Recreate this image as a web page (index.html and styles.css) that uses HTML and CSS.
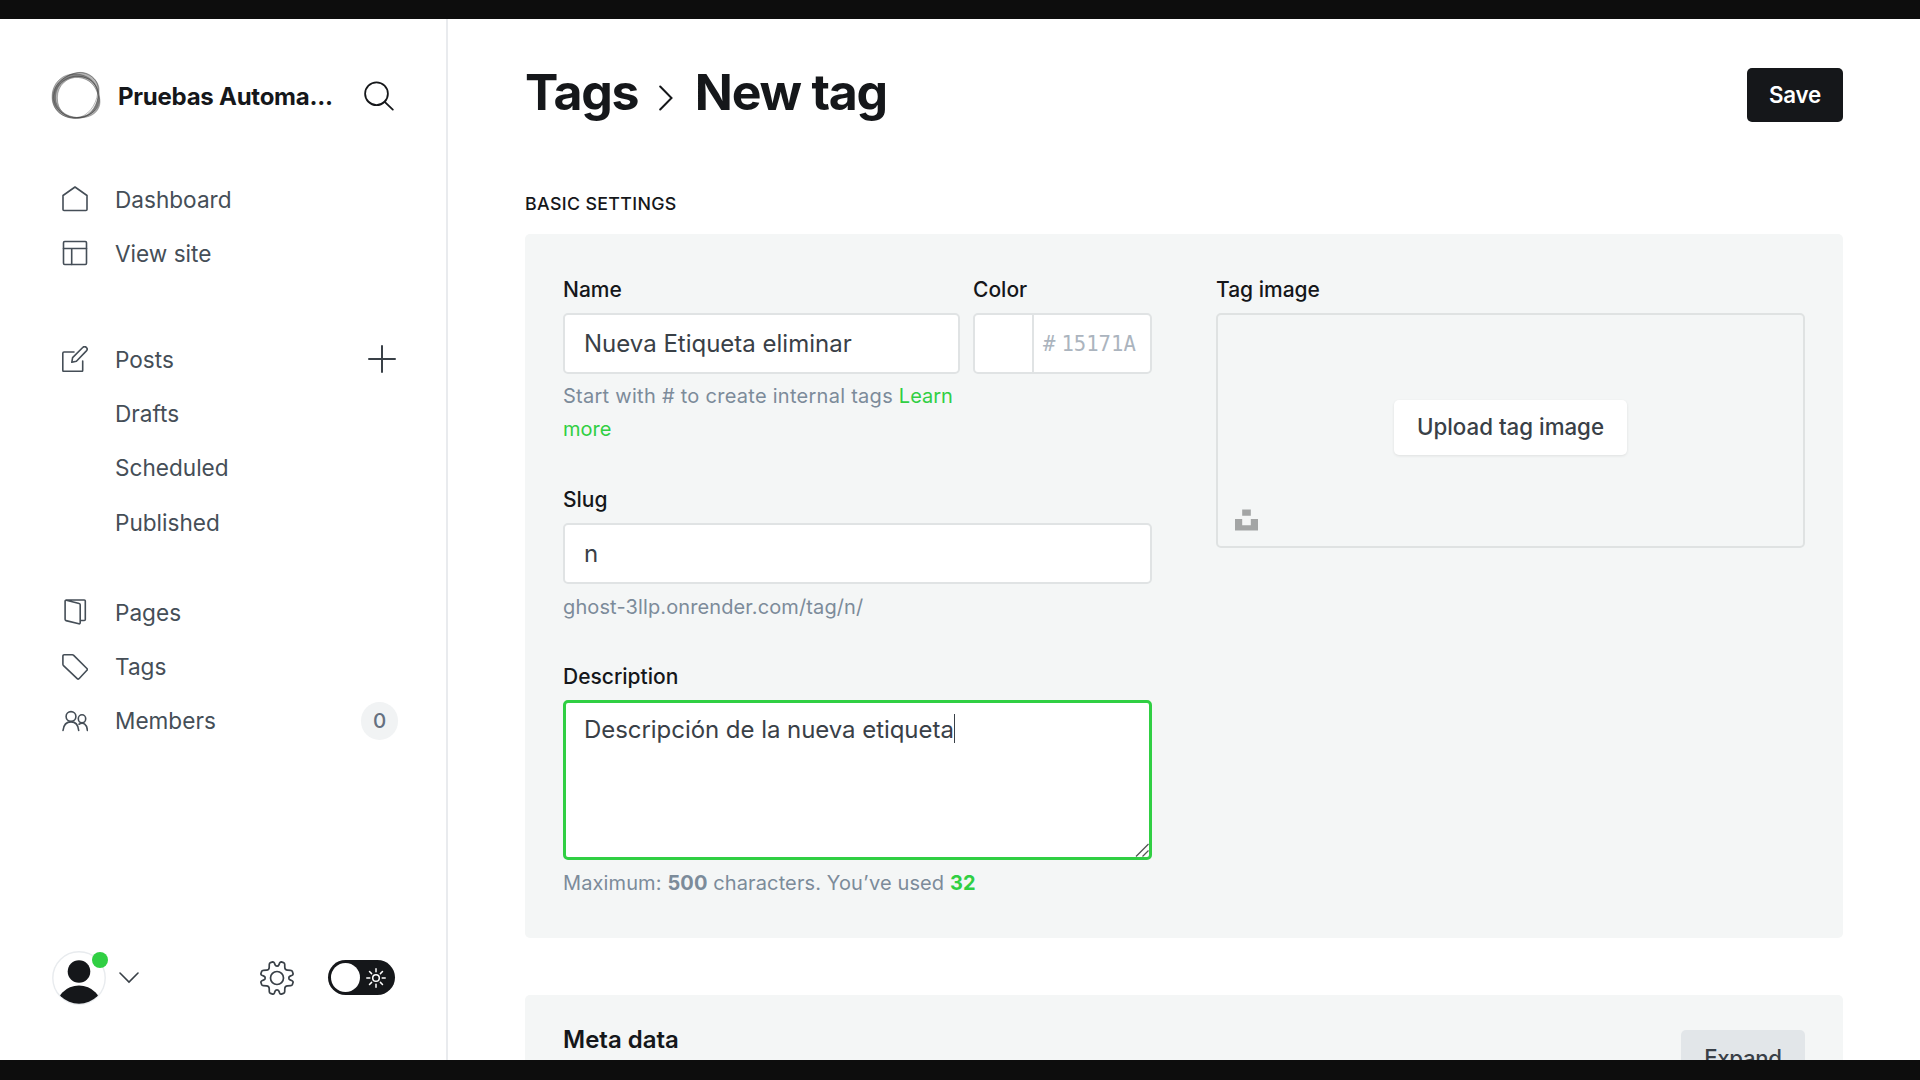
FILE: index.html
```html
<!DOCTYPE html>
<html lang="en">
<head>
<meta charset="utf-8">
<title>Tags - New tag</title>
<link rel="stylesheet" href="styles.css">
</head>
<body>
<div class="screen">
  <aside class="sidebar">
    <header class="site">
      <svg class="site-logo" viewBox="0 0 50 50" fill="#222" fill-opacity=".33" fill-rule="evenodd" stroke="#333" stroke-opacity=".6" stroke-width=".6">
        <path d="M.6 26C.6 12 11 2.500 24 3C37 3.500 47 12 46.500 25C46 38 37 47.500 25 47.500C11 47.500 .6 39 .6 26ZM5.800 27C5.800 14 16 5.500 27 6.500C38 7.500 44.500 15 46.800 25C49.500 38 38 46.500 26 47C14 47.500 5.800 39 5.800 27Z"/>
        <path d="M2 24C3 11 16 4 23 2.300C35-1 47 8 47.500 18C48 26 44 37 38 42C32 47.500 20 48 12 43C5 39 1 33 2 24ZM4 25C5 13 14 7 24 5.500C34 5 42 9 45 17C47 24 50 29 47.500 36C44 45 34 47.500 25 46.500C12 45 3 36 4 25Z"/>
        <path d="M1.200 28C.6 14 13 3.500 27 1.500C39 .2 49 11 46.200 22C45 34 36 46.500 24 47C12 47.300 1.800 40 1.200 28Z" fill="none"/>
        <path d="M3 22C7 9 20 3 32 6C43 9 49 20 48 30C47 41 36 46 25 46.500C11 47 0 35 3 22Z" fill="none"/>
      </svg>
      <div class="site-name">Pruebas Automa...</div>
      <svg class="search" viewBox="0 0 30 30"><circle cx="12.500" cy="12.700" r="11.400"/><path d="M20.700 20.800L28.800 28.600"/></svg>
    </header>
    <nav class="nav">
      <ul class="group">
        <li><svg class="ico" viewBox="0 0 26 26"><path d="M1 9.500L13 1l12 8.500V23.500a1 1 0 0 1-1 1H2a1 1 0 0 1-1-1Z"/></svg><span>Dashboard</span></li>
        <li><svg class="ico" viewBox="0 0 26 26"><rect x="1.500" y="1.500" width="23" height="23" rx="1.200"/><path d="M1.500 8.500h23M9.700 8.500v16"/></svg><span>View site</span></li>
      </ul>
      <ul class="group">
        <li><svg class="ico" viewBox="0 0 26 26"><path d="M12 6H2a1.200 1.200 0 0 0-1.200 1.200v17A1.200 1.200 0 0 0 2 25.400h17.500a1.200 1.200 0 0 0 1.200-1.200V15M9.800 16.300l.8-4.700L20.700 1.500a2.300 2.300 0 0 1 3.700 3.400L14.400 15.200Z"/></svg><span>Posts</span><svg class="plus" viewBox="0 0 28 28"><path d="M14 1v26M1 14h26"/></svg></li>
        <li class="sub"><span>Drafts</span></li>
        <li class="sub"><span>Scheduled</span></li>
        <li class="sub"><span>Published</span></li>
      </ul>
      <ul class="group">
        <li><svg class="ico" viewBox="0 0 26 26"><path d="M4.500 1h17.800a1 1 0 0 1 1 1v18.500a1 1 0 0 1-1 1H18.500M4.300 1.200l12.900 3.300a1.200 1.200 0 0 1 1 1.200v18.100a1 1 0 0 1-1.300 1L4 21.600a1.200 1.200 0 0 1-.9-1.200V2.100a1 1 0 0 1 1.200-.9Z"/></svg><span>Pages</span></li>
        <li><svg class="ico" viewBox="0 0 26 26"><path d="M.9 2a1.200 1.200 0 0 1 1.200-1.200h8.200a2 2 0 0 1 1.400.6L24.900 14.500a1.300 1.300 0 0 1 0 1.800L17 24.700a1.300 1.300 0 0 1-1.800 0L1.500 11.700a2 2 0 0 1-.6-1.400Z"/></svg><span>Tags</span></li>
        <li><svg class="ico" viewBox="0 0 26 26"><circle cx="9" cy="8.500" r="4.900"/><ellipse cx="20" cy="10.800" rx="3.700" ry="4"/><path d="M1 22.500c.6-5.500 3.600-8.600 8-8.600s7.200 3.100 7.700 8.600M17 16.200c4.500-2.500 8 .3 8.400 6.300"/></svg><span>Members</span><span class="badge">0</span></li>
      </ul>
    </nav>
    <footer class="foot">
      <div class="avatar">
        <svg viewBox="0 0 54 54"><defs><clipPath id="av"><circle cx="27" cy="27" r="25.800"/></clipPath></defs><circle cx="27" cy="27" r="26.200" fill="#fff" stroke="#e8ebee" stroke-width="1.400"/><g fill="#15171a" clip-path="url(#av)"><circle cx="27" cy="20.500" r="11.300"/><circle cx="27" cy="58" r="23.500"/></g></svg>
        <span class="dot"></span>
      </div>
      <svg class="chev" viewBox="0 0 20 12"><path d="M1 1l9 9 9-9"/></svg>
      <svg class="gear" viewBox="-17 -17 34 34"><defs><path id="teeth" d="M0-11.800Q1.400-11.800 1.900-13.100L2.700-15.100Q3.200-16.200 4.300-16.100L6.500-15.400Q7.700-15 7.700-13.800L7.800-10.500Q7.900-7.900 10.500-7.800L13.800-7.700Q15-7.700 15.400-6.500L16.100-4.300Q16.200-3.200 15.100-2.700L13.100-1.900Q11.800-1.400 11.800 0"/></defs><circle r="6.500"/><use href="#teeth"/><use href="#teeth" transform="rotate(90)"/><use href="#teeth" transform="rotate(180)"/><use href="#teeth" transform="rotate(270)"/></svg>
      <div class="toggle"><span class="knob"></span><svg viewBox="0 0 20 20"><circle cx="10" cy="10" r="3.300"/><path d="M10 .8v3M10 16.200v3M.8 10h3M16.200 10h3M3.500 3.500l2.100 2.100M14.400 14.400l2.100 2.100M3.500 16.500l2.100-2.100M14.400 5.600l2.100-2.100"/></svg></div>
    </footer>
  </aside>
  <main class="main">
    <header class="head">
      <h1 class="title"><span>Tags</span><svg viewBox="0 0 14 26"><path d="M1.200 1.500L12.500 13 1.200 24.500"/></svg><span>New tag</span></h1>
      <button class="save">Save</button>
    </header>
    <h2 class="section">BASIC SETTINGS</h2>
    <section class="card basic">
      <div class="col">
        <div class="pair">
          <div class="name">
            <div class="label">Name</div>
            <div class="input">Nueva Etiqueta eliminar</div>
            <p class="help"><span class="hint">Start with # to create internal tags </span><a>Learn more</a></p>
          </div>
          <div class="color">
            <div class="label">Color</div>
            <div class="input hex"><span class="swatch"></span><span class="hash">#</span><span class="code">15171A</span></div>
          </div>
        </div>
        <div class="slug">
          <div class="label">Slug</div>
          <div class="input">n</div>
          <p class="help">ghost-3llp.onrender.com/tag/n/</p>
        </div>
        <div class="desc">
          <div class="label">Description</div>
          <div class="area"><span>Descripción de la nueva etiqueta</span><i class="caret"></i><svg class="grip" viewBox="0 0 14 14"><path d="M1 13.500L13.500 1M7.500 13.500l6-6"/></svg></div>
          <p class="help">Maximum: <b>500</b> characters. You’ve used <b class="used">32</b></p>
        </div>
      </div>
      <div class="col">
        <div class="label">Tag image</div>
        <div class="drop"><button class="upload">Upload tag image</button><svg class="unsplash" viewBox="0 0 24 22"><path d="M7.500 0h9v6.500h-9ZM0 10h7.500v6.500h9V10H24v12H0Z"/></svg></div>
      </div>
    </section>
    <section class="card meta"><h3>Meta data</h3><button class="expand">Expand</button></section>
  </main>
</div>
</body>
</html>
```
FILE: styles.css
```css
* { box-sizing: border-box; }
body { margin: 0; background: #0d0d0d; font-family: Inter, "Noto Sans", sans-serif; color: #15171a; }
h1, h2, h3, p, ul { margin: 0; padding: 0; }
button { font-family: inherit; border: 0; padding: 0; }
svg { display: block; flex: none; }
.screen { height: 1080px; border-top: 19px solid #0d0d0d; border-bottom: 20px solid #0d0d0d; background: #fff; display: flex; overflow: hidden; }
.sidebar { width: 448px; flex: none; border-right: 2px solid #e9ebee; display: flex; flex-direction: column; }
.site { height: 50px; margin-top: 52px; padding-left: 51px; display: flex; align-items: center; }
.site-logo { width: 51px; height: 50px; }
.site-name { margin-left: 16px; width: 246px; padding-top: 2px; font-size: 24px; line-height: 50px; font-weight: 700; letter-spacing: -.25px; }
.search { width: 30px; height: 30px; fill: none; stroke: #15171a; stroke-width: 1.800; stroke-linecap: round; }
.nav { margin-top: 50.900px; padding: 0 47px 0 62px; }
.group { list-style: none; }
.group + .group { margin-top: 51.300px; }
.group + .group + .group { margin-top: 35.400px; }
.group li { height: 54.400px; display: flex; align-items: center; font-size: 22.600px; color: #454e57; }
.ico { width: 26px; height: 26px; margin-right: 27px; fill: none; stroke: #454e57; stroke-width: 1.600; stroke-linejoin: round; stroke-linecap: round; }
.group .sub { padding-left: 53px; }
.plus { width: 28px; height: 28px; margin-left: auto; margin-right: 3px; fill: none; stroke: #394047; stroke-width: 2; stroke-linecap: round; }
.badge { margin-left: auto; margin-right: 1px; width: 37px; height: 38px; border-radius: 19px; background: #f1f3f4; color: #657080; font-size: 20.500px; font-weight: 500; line-height: 38px; text-align: center; }
.foot { margin-top: auto; margin-bottom: 55.500px; height: 54px; padding-left: 51.500px; display: flex; align-items: center; }
.avatar { width: 54px; height: 54px; position: relative; }
.avatar svg { width: 54px; height: 54px; }
.dot { position: absolute; left: 40px; top: 1px; width: 16px; height: 16px; border-radius: 50%; background: #30cf43; }
.chev { width: 20px; height: 12px; margin-left: 13px; fill: none; stroke: #394047; stroke-width: 1.600; stroke-linecap: round; }
.gear { width: 34px; height: 34px; margin-left: 121.500px; fill: none; stroke: #394047; stroke-width: 1.700; stroke-linejoin: round; }
.toggle { margin-left: 34px; width: 67px; height: 35px; border-radius: 18px; background: #15171a; display: flex; align-items: center; padding-left: 3px; }
.knob { width: 29px; height: 29px; border-radius: 50%; background: #fff; }
.toggle svg { width: 20px; height: 20px; margin-left: 6px; fill: none; stroke: #fff; stroke-width: 1.500; stroke-linecap: round; }
.main { flex: 1; padding: 49px 77px 0 77px; overflow: hidden; }
.head { height: 54px; display: flex; justify-content: space-between; align-items: center; }
.title { display: flex; align-items: center; padding-bottom: 7px; font-size: 50px; line-height: 54px; font-weight: 700; letter-spacing: -1.250px; }
.title svg { width: 14px; height: 26px; margin: 12px 22px 0 20.500px; fill: none; stroke: #15171a; stroke-width: 2; stroke-linecap: round; }
.save { width: 96px; height: 54px; padding-bottom: 1px; border-radius: 5px; background: #15171a; color: #fff; font-size: 22.300px; font-weight: 600; letter-spacing: -.2px; }
.section { margin-top: 68px; font-size: 17.800px; line-height: 28px; font-weight: 500; letter-spacing: .35px; }
.card { background: #f4f6f6; border-radius: 5px; }
.basic { margin-top: 16px; height: 704px; padding: 39px 38px 0; display: grid; grid-template-columns: 589px 589px; column-gap: 64px; }
.label { height: 40px; font-size: 21px; line-height: 34px; font-weight: 500; }
.pair { height: 210px; display: flex; gap: 13px; }
.name { width: 397px; }
.color { width: 179px; }
.input { height: 60.500px; border: 2px solid #e0e3e4; border-radius: 5px; background: #fff; padding-left: 19px; font-size: 24px; line-height: 57px; color: #394047; }
.help { margin-top: 7px; font-size: 20px; line-height: 33.500px; letter-spacing: .12px; color: #7c8b9a; }
.pair .help { margin-top: 6px; }
.help .hint { letter-spacing: .270px; }
.help a { letter-spacing: 0; }
.help a, .used { color: #30cf43; }
.hex { display: flex; padding: 0; font-family: "DejaVu Sans Mono", monospace; font-size: 20.600px; line-height: 59px; color: #abb4be; }
.swatch { width: 59px; border-right: 2px solid #e0e3e4; }
.hash { margin-left: 9px; }
.code { margin-left: 6px; }
.slug { height: 177px; }
.area { height: 160px; border: 3px solid #30cf43; border-radius: 5px; background: #fff; padding: 11px 18px; font-size: 24px; line-height: 32px; letter-spacing: -.05px; color: #394047; position: relative; display: flex; align-items: flex-start; }
.caret { width: 1.500px; height: 29px; background: #394047; }
.grip { position: absolute; right: 0; bottom: 0; width: 14px; height: 14px; stroke: #555; stroke-width: 1.300; fill: none; }
.drop { height: 235px; padding-bottom: 7px; border: 2px solid #dfe2e2; border-radius: 5px; display: flex; align-items: center; justify-content: center; position: relative; }
.upload { width: 233px; height: 55px; padding-bottom: 2px; border-radius: 5px; background: #fff; box-shadow: 0 1px 3px rgba(0,0,0,.09); font-size: 22.300px; font-weight: 500; color: #394047; }
.unsplash { position: absolute; left: 17px; bottom: 15px; width: 23px; height: 22px; fill: #a3a5a5; }
.meta { margin-top: 57px; height: 140px; padding: 35px 38px; display: flex; justify-content: space-between; align-items: flex-start; }
.meta h3 { font-size: 24px; line-height: 20px; font-weight: 600; }
.expand { width: 124px; height: 55px; padding-bottom: 1px; border-radius: 5px; background: #e2e6e9; color: #394047; font-size: 22.200px; font-weight: 500; letter-spacing: -.3px; }
```
